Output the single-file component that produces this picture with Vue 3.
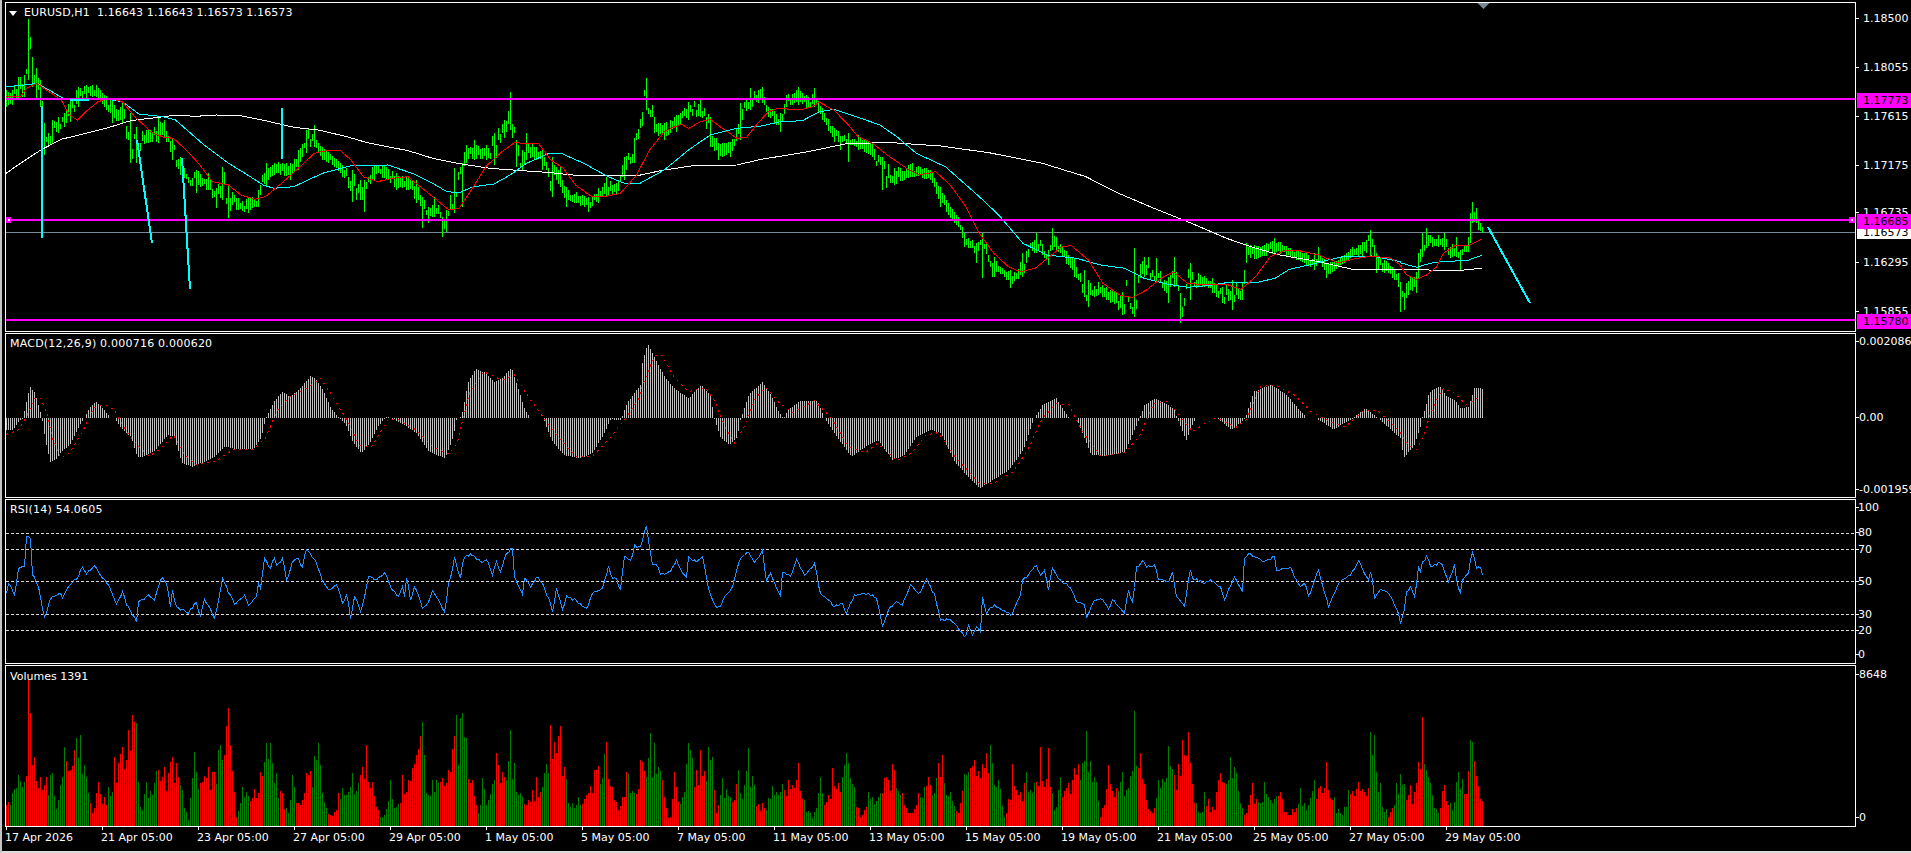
<script setup>
// Chart is drawn in page pixels: each svg viewBox starts at its pane's page position.
// Traces were read off three crops, so x/y are kept in crop units and converted below.
const left = [2.45, 0]
const mid = [2.063, 640]
const right = [3, 1400]

const trace = (oy, parts) =>
  parts.flatMap(([[sx, ox], pts]) =>
    pts.map(([x, ...ys]) => [x / sx + ox, ...ys.map((y) => y / 3 + oy)])
  )

const flat = (a) => {
  const out = []
  for (let i = 0; i < a.length; i += 3) out.push([a[i], a[i + 1], a[i + 2]])
  return out
}
const pairs = (a) => {
  const out = []
  for (let i = 0; i < a.length; i += 2) out.push([a[i], a[i + 1]])
  return out
}

const pricePts = trace(0, [
  [left, flat([15,270,320, 30,270,315, 45,230,295, 60,225,290, 70,58,240, 80,170,260, 90,205,300, 100,240,320, 110,370,465, 125,360,430, 140,350,400, 155,340,380, 170,300,365, 190,260,320, 210,255,295, 235,255,290, 255,285,320, 275,300,370, 300,310,370, 320,340,490, 335,380,490, 360,390,430, 385,350,430, 400,360,410, 420,415,480, 440,470,525, 460,530,550, 480,510,580, 510,520,570, 530,565,625, 545,500,600, 560,555,655, 580,595,630, 610,595,640, 630,570,620, 650,490,560, 680,485,520, 710,490,540, 730,450,510, 750,390,460, 770,375,440, 790,440,480, 820,475,500, 840,495,530, 860,510,605, 880,540,600, 890,540,635, 910,500,540, 940,495,535, 970,520,570, 1000,530,570, 1020,540,610, 1035,590,685, 1050,620,670, 1065,590,650, 1085,650,710, 1095,630,695, 1110,505,640, 1130,490,620, 1140,435,490, 1160,420,480, 1190,435,480, 1210,400,495, 1235,360,415, 1250,275,390, 1265,420,500, 1280,450,510, 1290,400,480, 1310,440,480, 1330,450,510, 1350,470,590, 1370,500,560, 1385,560,620, 1410,575,610, 1440,590,635, 1465,565,610, 1485,530,590, 1510,550,585, 1530,470,540, 1555,415,490])],
  [mid, flat([13,235,330, 30,350,400, 50,370,420, 75,345,395, 100,305,360, 125,300,350, 145,350,440, 160,430,480, 185,425,470, 205,310,420, 225,265,330, 250,262,310, 265,320,350, 290,340,395, 300,285,320, 325,262,315, 345,290,325, 360,265,320, 375,325,360, 400,385,425, 430,400,485, 450,405,450, 480,430,470, 500,470,570, 525,505,555, 560,490,530, 600,510,540, 620,560,620, 640,620,655, 655,650,680, 670,700,740, 695,730,790, 705,700,835, 730,770,830, 750,810,830, 765,810,865, 790,760,830, 815,700,760, 840,750,795, 850,685,750, 870,740,770, 895,775,830, 915,810,890, 925,840,920, 945,845,885, 970,870,910, 995,875,945, 1020,745,950, 1040,770,830, 1065,775,850, 1090,830,910, 1100,770,860, 1115,880,970, 1133,790,900, 1150,820,860, 1180,835,880, 1200,860,910, 1220,840,930, 1243,850,900, 1250,730,790, 1280,740,770, 1310,715,765, 1340,745,770, 1370,760,790, 1390,760,810, 1400,740,790, 1415,790,835, 1440,780,800, 1470,740,770, 1490,725,770, 1507,690,770, 1520,760,820, 1545,790,820, 1565,820,860])],
  [right, flat([0,845,935, 10,880,930, 20,850,895, 30,830,870, 45,815,880, 55,760,835, 67,700,770, 80,685,745, 95,710,740, 115,705,740, 130,700,750, 150,740,775, 165,710,770, 177,750,810, 190,735,755, 205,710,755, 212,640,730, 218,605,670, 225,625,670, 235,660,690, 248,680,700])],
])

const redMa = trace(0, [
  [left, pairs([15,290, 50,290, 65,265, 90,250, 120,275, 150,300, 170,345, 190,360, 210,335, 240,305, 270,295, 300,305, 330,350, 370,395, 400,412, 425,415, 460,455, 490,495, 520,545, 560,555, 590,585, 625,598, 650,590, 690,550, 740,495, 770,460, 800,452, 835,453, 860,480, 890,530, 925,545, 960,535, 1000,530, 1030,560, 1060,590, 1100,630, 1125,625, 1160,560, 1190,500, 1230,455, 1260,428, 1320,432, 1350,480, 1380,505, 1410,555, 1450,590, 1480,590, 1520,580, 1560,525])],
  [mid, pairs([0,505, 20,450, 50,395, 85,372, 100,385, 125,365, 145,358, 170,385, 200,415, 220,412, 240,375, 265,335, 285,325, 330,330, 355,320, 370,307, 400,330, 430,375, 450,410, 480,430, 510,465, 550,505, 575,525, 610,515, 640,555, 670,615, 700,700, 730,760, 760,800, 785,815, 815,805, 845,770, 870,740, 890,737, 925,780, 955,850, 990,885, 1015,893, 1045,870, 1075,835, 1100,815, 1130,850, 1170,855, 1210,853, 1240,868, 1270,830, 1300,770, 1330,752, 1360,752, 1400,765, 1440,788, 1480,775, 1510,768, 1550,775, 1568,795])],
  [right, pairs([0,795, 20,825, 50,838, 80,825, 110,800, 130,760, 165,737, 205,737, 230,725, 245,718])],
])

const cyanMa = trace(0, [
  [left, pairs([15,260, 60,255, 90,250, 120,270, 155,295, 170,300, 250,295, 300,305, 340,342, 400,350, 430,360, 500,435, 560,490, 600,520, 645,555, 670,565, 720,560, 790,520, 860,497, 950,495, 1010,520, 1060,550, 1095,575, 1125,578, 1160,560, 1210,552, 1250,525, 1290,490, 1345,460, 1375,460, 1430,490, 1490,530, 1530,550, 1568,550])],
  [mid, pairs([0,550, 50,510, 100,450, 145,405, 200,385, 250,378, 290,365, 335,362, 370,335, 400,328, 450,352, 495,375, 530,410, 570,460, 630,500, 700,590, 740,645, 790,730, 840,765, 900,775, 950,795, 1000,805, 1040,835, 1090,853, 1130,862, 1170,857, 1210,848, 1270,848, 1310,835, 1340,808, 1380,795, 1420,780, 1450,770, 1510,768, 1568,785])],
  [right, pairs([0,788, 50,802, 90,790, 130,784, 200,782, 245,766])],
])

const whiteMa = trace(0, [
  [left, pairs([15,520, 50,490, 100,450, 150,418, 200,403, 260,385, 320,362, 400,350, 430,346, 480,349, 530,345, 590,347, 650,362, 720,382, 780,390, 850,410, 900,428, 1000,452, 1060,475, 1120,490, 1200,505, 1280,512, 1340,517, 1420,527, 1568,527])],
  [mid, pairs([0,525, 50,510, 110,497, 200,495, 250,478, 340,457, 430,430, 520,428, 620,438, 720,458, 830,490, 920,530, 980,575, 1060,625, 1130,665, 1210,715, 1260,740, 1320,765, 1400,785, 1470,808, 1568,808])],
  [right, pairs([0,808, 170,812, 245,805])],
])

const macdPts = trace(330, [
  [left, pairs([15,300, 30,300, 45,275, 55,265, 65,210, 72,168, 85,190, 97,240, 102,265, 110,330, 122,395, 135,390, 150,365, 170,345, 195,285, 205,265, 220,230, 235,215, 255,240, 270,265, 280,265, 300,300, 320,320, 335,380, 350,380, 380,360, 410,315, 425,320, 445,400, 470,410, 500,395, 520,385, 550,350, 580,358, 620,358, 640,320, 650,265, 670,215, 690,185, 710,200, 730,180, 745,160, 760,138, 775,150, 790,180, 810,235, 830,265, 845,280, 865,340, 885,370, 905,340, 925,290, 945,260, 965,268, 990,285, 1020,310, 1050,365, 1090,385, 1110,320, 1118,265, 1130,260, 1145,160, 1165,115, 1190,130, 1210,155, 1230,145, 1252,112, 1270,180, 1285,240, 1300,265, 1330,265, 1350,330, 1380,375, 1420,385, 1450,370, 1480,310, 1495,268, 1520,270, 1535,220, 1568,165])],
  [mid, pairs([0,120, 15,40, 30,85, 50,140, 70,175, 90,195, 100,205, 125,165, 145,195, 152,265, 165,320, 183,345, 200,320, 207,265, 225,190, 252,157, 270,195, 285,245, 295,265, 305,240, 330,212, 365,212, 380,265, 400,310, 435,380, 470,345, 490,330, 520,390, 545,375, 570,320, 600,300, 620,310, 650,400, 700,475, 760,420, 790,360, 812,265, 830,225, 858,205, 885,265, 900,265, 930,375, 960,378, 1000,365, 1030,265, 1040,225, 1063,205, 1100,235, 1108,265, 1126,330, 1145,265, 1190,265, 1220,300, 1248,265, 1265,185, 1300,165, 1330,190, 1375,265, 1395,265, 1430,298, 1470,265, 1495,235, 1520,262, 1568,325])],
  [right, pairs([0,340, 12,380, 40,350, 60,290, 65,265, 75,235, 85,190, 100,178, 120,170, 140,200, 165,210, 180,235, 205,230, 222,175, 242,175, 248,180])],
])

const signalPts = trace(330, [
  [left, pairs([15,313, 45,300, 65,260, 85,205, 100,205, 115,250, 130,330, 150,385, 170,370, 200,310, 230,235, 255,222, 280,240, 310,305, 340,350, 365,378, 390,360, 425,315, 450,370, 480,405, 530,392, 570,360, 620,358, 650,325, 680,240, 710,200, 750,175, 785,145, 810,190, 850,270, 880,345, 910,350, 950,270, 975,268, 1020,300, 1060,350, 1100,372, 1120,340, 1150,190, 1185,125, 1230,150, 1260,135, 1300,210, 1330,260, 1370,325, 1410,378, 1450,380, 1490,330, 1530,270, 1568,200])],
  [mid, pairs([0,185, 30,78, 45,75, 70,140, 100,185, 135,172, 155,215, 175,290, 195,338, 215,290, 235,210, 260,172, 285,215, 315,248, 360,212, 395,265, 430,350, 465,368, 490,340, 530,392, 560,370, 590,315, 615,308, 650,380, 700,460, 730,460, 770,425, 800,360, 830,265, 860,220, 885,225, 915,310, 950,378, 1000,368, 1030,320, 1060,220, 1090,215, 1120,270, 1140,305, 1165,280, 1190,263, 1230,292, 1250,270, 1280,170, 1310,165, 1350,195, 1385,245, 1430,280, 1455,290, 1490,245, 1520,240, 1568,305])],
  [right, pairs([0,308, 25,345, 50,358, 70,320, 90,255, 110,210, 130,175, 165,190, 200,225, 240,200])],
])

const rsiPts = trace(330, [
  [left, pairs([15,790, 22,760, 35,795, 45,715, 58,710, 65,620, 72,625, 80,735, 92,770, 108,862, 125,800, 145,790, 150,805, 165,770, 190,740, 200,712, 210,732, 232,707, 250,745, 265,765, 285,822, 300,785, 310,825, 334,875, 340,815, 365,795, 375,810, 395,743, 408,760, 417,830, 422,780, 430,830, 460,850, 478,818, 490,858, 500,808, 525,865, 545,745, 560,790, 575,822, 597,795, 610,825, 625,800, 630,760, 637,775, 647,685, 660,715, 670,685, 678,705, 692,685, 702,750, 715,695, 728,685, 738,712, 750,658, 775,700, 790,755, 805,778, 825,765, 840,820, 850,795, 858,868, 868,800, 883,845, 903,740, 920,750, 942,728, 955,770, 975,800, 985,770, 990,800, 996,745, 1005,810, 1015,770, 1035,835, 1045,825, 1060,782, 1088,845, 1100,760, 1113,680, 1125,745, 1135,682, 1152,672, 1180,698, 1192,690, 1205,735, 1215,695, 1225,725, 1240,670, 1252,656, 1260,740, 1278,793, 1285,745, 1298,772, 1315,742, 1328,760, 1340,795, 1354,845, 1362,775, 1377,838, 1388,798, 1410,812, 1437,835, 1450,790, 1475,775, 1490,708, 1497,745, 1508,745, 1517,778, 1530,680, 1545,690, 1555,645, 1568,660])],
  [mid, pairs([0,650, 12,587, 20,670, 25,703, 35,705, 40,733, 60,725, 75,690, 85,730, 95,742, 100,680, 115,695, 128,680, 140,775, 155,832, 165,830, 175,800, 190,770, 205,685, 222,667, 235,697, 253,660, 258,755, 268,730, 288,797, 295,728, 310,738, 322,688, 338,735, 360,700, 370,790, 388,810, 400,830, 418,820, 423,850, 443,795, 470,790, 487,805, 500,888, 515,830, 530,815, 540,825, 557,765, 575,790, 590,748, 605,790, 620,870, 640,870, 670,920, 678,885, 685,915, 695,890, 703,905, 707,800, 712,850, 730,825, 765,855, 785,795, 790,750, 815,707, 825,735, 835,720, 840,780, 850,713, 865,750, 885,770, 900,815, 915,825, 921,862, 935,810, 955,808, 965,838, 975,810, 1000,850, 1005,780, 1015,815, 1025,710, 1037,692, 1045,712, 1062,705, 1070,750, 1090,755, 1098,725, 1105,800, 1123,828, 1133,720, 1140,745, 1165,760, 1175,750, 1195,770, 1205,810, 1225,740, 1241,785, 1248,685, 1255,672, 1285,695, 1310,680, 1313,720, 1340,712, 1360,770, 1370,760, 1380,797, 1397,720, 1420,830, 1440,760, 1465,735, 1482,692, 1500,750, 1508,725, 1515,805, 1525,778, 1545,790, 1555,825, 1568,868])],
  [right, pairs([0,882, 8,860, 20,785, 30,770, 43,800, 55,712, 62,725, 68,695, 80,678, 92,708, 105,705, 115,698, 125,705, 145,755, 163,702, 170,750, 177,788, 185,750, 205,730, 210,690, 218,668, 230,715, 240,712, 248,735])],
])

const volumePts = trace(660, [
  [left, pairs([15,435, 30,400, 45,345, 60,365, 70,60, 75,160, 85,290, 100,350, 115,350, 125,340, 140,420, 150,350, 157,260, 170,330, 185,235, 197,225, 210,350, 225,460, 240,365, 255,410, 265,380, 280,290, 300,260, 312,210, 323,165, 333,190, 345,440, 360,365, 385,330, 400,320, 420,290, 430,310, 445,390, 460,480, 476,275, 490,370, 510,320, 535,270, 560,145, 565,255, 580,470, 595,380, 615,415, 635,335, 650,250, 662,250, 675,340, 690,400, 705,460, 716,345, 730,430, 750,340, 780,250, 790,400, 810,465, 830,400, 860,340, 885,320, 898,255, 910,365, 925,450, 940,465, 955,360, 970,440, 985,345, 1010,325, 1020,285, 1035,185, 1045,400, 1060,360, 1085,355, 1100,330, 1115,165, 1132,160, 1140,235, 1155,360, 1170,460, 1182,355, 1195,420, 1215,280, 1235,350, 1250,210, 1260,310, 1275,400, 1295,420, 1315,350, 1335,340, 1348,195, 1372,198, 1380,320, 1400,430, 1415,410, 1440,400, 1455,330, 1485,245, 1500,380, 1515,450, 1535,335, 1568,340])],
  [mid, pairs([0,300, 22,220, 30,250, 45,360, 60,470, 72,335, 85,410, 100,250, 115,330, 125,270, 140,262, 150,290, 158,460, 170,355, 185,410, 203,330, 215,375, 222,265, 235,375, 250,430, 265,415, 272,378, 295,372, 325,310, 340,420, 355,475, 372,350, 385,425, 397,325, 415,350, 425,278, 440,380, 455,470, 470,395, 490,410, 505,355, 520,312, 540,400, 560,460, 575,400, 595,350, 625,285, 640,395, 655,460, 670,342, 690,300, 722,255, 740,360, 752,470, 768,312, 780,405, 795,335, 805,390, 825,260, 835,380, 843,265, 855,450, 865,350, 895,325, 921,213, 940,365, 950,470, 965,315, 980,385, 995,335, 1005,385, 1020,153, 1030,280, 1045,420, 1055,460, 1070,360, 1090,258, 1100,345, 1119,240, 1132,217, 1145,430, 1155,460, 1165,395, 1180,440, 1195,340, 1205,370, 1218,290, 1230,340, 1245,465, 1262,370, 1275,425, 1288,365, 1300,420, 1320,395, 1340,465, 1360,385, 1375,450, 1390,360, 1400,385, 1415,305, 1430,410, 1445,460, 1460,390, 1480,365, 1495,395, 1507,217, 1515,225, 1525,370, 1545,470, 1560,370, 1568,410])],
  [right, pairs([0,342, 10,372, 30,375, 40,395, 55,305, 67,170, 72,312, 80,330, 90,370, 97,405, 105,448, 115,460, 127,393, 133,375, 140,422, 160,425, 165,365, 175,336, 185,358, 205,333, 212,240, 218,245, 225,348, 235,378, 248,422])],
])

// seeded so every render gives the same chart
let seed = 20260417
const rnd = () => {
  seed = (seed * 1664525 + 1013904223) % 4294967296
  return seed / 4294967296
}

const FIRST_X = 6
const BAR_COUNT = 739
const barXs = Array.from({ length: BAR_COUNT }, (_, i) => FIRST_X + i * 2)
const barIndex = (x) => Math.max(0, Math.min(BAR_COUNT - 1, Math.round((x - FIRST_X) / 2)))

const sample = (pts, x, col = 1) => {
  if (x <= pts[0][0]) return pts[0][col]
  for (let i = 1; i < pts.length; i++) {
    if (x <= pts[i][0]) {
      const [a, b] = [pts[i - 1], pts[i]]
      const span = b[0] - a[0]
      if (span <= 0) return b[col]
      return a[col] + ((b[col] - a[col]) * (x - a[0])) / span
    }
  }
  return pts[pts.length - 1][col]
}

const linePath = (pts) => 'M' + pts.map(([x, y]) => `${x.toFixed(1)} ${y.toFixed(1)}`).join('L')

// price bars: random bar inside the traced range, traced bars kept as they are
const priceRows = barXs.map((x) => {
  const top = sample(pricePts, x, 1)
  const bottom = sample(pricePts, x, 2)
  const range = bottom - top
  const h = Math.min(range, 5 + rnd() * 9)
  const y = top + rnd() * (range - h)
  return [y, y + h]
})
pricePts.forEach(([x, top, bottom]) => {
  priceRows[barIndex(x)] = [top, bottom]
})
const priceBars = barXs
  .map((x, i) => `M${x + 0.5} ${Math.round(priceRows[i][0])}V${Math.round(priceRows[i][1])}`)
  .join('')

const MACD_ZERO = 418
const macdBars = barXs
  .map((x) => `M${x + 0.5} ${MACD_ZERO}V${Math.round(sample(macdPts, x))}`)
  .join('')

const rsiRows = barXs.map((x) => sample(rsiPts, x) + (rnd() - 0.5) * 2.4)
rsiPts.forEach(([x, y]) => {
  rsiRows[barIndex(x)] = y
})
const rsiPath = linePath(barXs.map((x, i) => [x + 0.5, rsiRows[i]]))

const VOLUME_BASE = 826
const volumeRows = barXs.map((x) => VOLUME_BASE - (VOLUME_BASE - sample(volumePts, x)) * (0.55 + rnd() * 0.45))
volumePts.forEach(([x, y]) => {
  volumeRows[barIndex(x)] = y
})
let up = false
let runLeft = 2
let upBars = ''
let downBars = ''
barXs.forEach((x, i) => {
  if (runLeft-- <= 0) {
    up = !up
    runLeft = 2 + Math.floor(rnd() * 9)
  }
  const isUp = x > 1472 ? false : up
  const piece = `M${x + 0.5} ${VOLUME_BASE}V${Math.round(volumeRows[i])}`
  if (isUp) upBars += piece
  else downBars += piece
})

const paths = {
  red: linePath(redMa),
  cyan: linePath(cyanMa),
  white: linePath(whiteMa),
  signal: linePath(signalPts),
}

const levels = [533, 549, 581, 614, 630]
const hLines = [98, 219, 319]
const trendLines = [
  [41.5, 106, 41.5, 238],
  [137, 140, 152, 243],
  [182, 158, 190, 289],
  [281.5, 108, 281.5, 159],
  [70, 100, 89, 100],
  [1488, 227, 1530, 303],
]

const PANE_TOPS = { price: 2, macd: 333, rsi: 499, volume: 665 }
const axisItem = (pane, text, y, pad) => ({ text, top: y - PANE_TOPS[pane] - 7, pad })

const priceAxis = [
  ['1.18500', 18.5], ['1.18055', 67.5], ['1.17615', 116.5], ['1.17175', 165.5],
  ['1.16735', 213], ['1.16295', 263], ['1.15855', 311.5],
].map(([t, y]) => axisItem('price', t, y, 7))

const priceTags = [
  { text: '1.17773', top: 91 },
  { text: '1.16685', top: 212 },
  { text: '1.15780', top: 312 },
]

const macdAxis = [['0.002086', 342], ['0.00', 418], ['-0.001959', 490]].map(([t, y]) => axisItem('macd', t, y, 3))
const rsiAxis = [['100', 508], ['80', 533], ['70', 549.5], ['50', 581.5], ['30', 614.5], ['20', 630.5], ['0', 655]]
  .map(([t, y]) => axisItem('rsi', t, y, 2))
const volumeAxis = [['8648', 674.5], ['0', 818]].map(([t, y]) => axisItem('volume', t, y, 3))

const timeLabels = [
  '17 Apr 2026', '21 Apr 05:00', '23 Apr 05:00', '27 Apr 05:00', '29 Apr 05:00', '1 May 05:00',
  '5 May 05:00', '7 May 05:00', '11 May 05:00', '13 May 05:00', '15 May 05:00', '19 May 05:00',
  '21 May 05:00', '25 May 05:00', '27 May 05:00', '29 May 05:00',
].map((text, i) => ({ text, left: i * 96 }))
</script>

<template>
  <div class="terminal">
    <div class="pane pane-price">
      <div class="plot">
        <svg width="1849" height="328" viewBox="6 3 1849 328">
          <rect x="6" y="232" width="1849" height="1" fill="#778899" />
          <path :d="priceBars" class="bars" stroke="#00ff00" />
          <path :d="paths.white" class="line" stroke="#ffffff" />
          <path :d="paths.cyan" class="line" stroke="#00ffff" />
          <path :d="paths.red" class="line" stroke="#ff0000" />
          <rect v-for="y in hLines" :key="y" x="6" :y="y" width="1849" height="2" fill="#ff00ff" />
          <line
            v-for="(t, i) in trendLines"
            :key="i"
            :x1="t[0]"
            :y1="t[1]"
            :x2="t[2]"
            :y2="t[3]"
            class="trend"
          />
          <rect x="6" y="217" width="5" height="6" fill="#ff00ff" />
          <rect x="8" y="219" width="2" height="2" fill="#ffffff" />
          <rect x="1849" y="217" width="6" height="6" fill="#ff00ff" />
          <rect x="1851" y="219" width="2" height="2" fill="#ffffff" />
          <polygon points="1477.5,3 1489.5,3 1483.5,9" fill="#778899" />
        </svg>
        <div class="caption caption-price">
          <svg class="arrow" width="8" height="5" viewBox="0 0 8 5"><polygon points="0,0 8,0 4,5" fill="#fff" /></svg>
          <span>EURUSD,H1&nbsp;&nbsp;1.16643 1.16643 1.16573 1.16573</span>
        </div>
      </div>
      <div class="axis">
        <span
          v-for="a in priceAxis"
          :key="a.text"
          class="axis-label"
          :style="{ top: a.top + 'px', paddingLeft: a.pad + 'px' }"
        >{{ a.text }}</span>
        <span
          v-for="t in priceTags"
          :key="t.text"
          class="axis-tag"
          :style="{ top: t.top + 'px' }"
        >{{ t.text }}</span>
        <span class="axis-bid">1.16573</span>
      </div>
    </div>

    <div class="pane pane-macd">
      <div class="plot">
        <svg width="1849" height="163" viewBox="6 334 1849 163">
          <path :d="macdBars" class="bars" stroke="#c0c0c0" />
          <path :d="paths.signal" class="line dashed-signal" stroke="#ff0000" />
        </svg>
        <div class="caption caption-sub">MACD(12,26,9) 0.000716 0.000620</div>
      </div>
      <div class="axis">
        <span
          v-for="a in macdAxis"
          :key="a.text"
          class="axis-label"
          :style="{ top: a.top + 'px', paddingLeft: a.pad + 'px' }"
        >{{ a.text }}</span>
      </div>
    </div>

    <div class="pane pane-rsi">
      <div class="plot">
        <svg width="1849" height="163" viewBox="6 500 1849 163">
          <line
            v-for="y in levels"
            :key="y"
            x1="6"
            x2="1855"
            :y1="y + 0.5"
            :y2="y + 0.5"
            class="level"
          />
          <path :d="rsiPath" class="line" stroke="#1e90ff" />
        </svg>
        <div class="caption caption-sub">RSI(14) 54.0605</div>
      </div>
      <div class="axis">
        <span
          v-for="a in rsiAxis"
          :key="a.text"
          class="axis-label"
          :style="{ top: a.top + 'px', paddingLeft: a.pad + 'px' }"
        >{{ a.text }}</span>
      </div>
    </div>

    <div class="pane pane-volume">
      <div class="plot">
        <svg width="1849" height="160" viewBox="6 666 1849 160">
          <path :d="upBars" class="bars" stroke="#008000" />
          <path :d="downBars" class="bars" stroke="#ff0000" />
        </svg>
        <div class="caption caption-volume">Volumes 1391</div>
      </div>
      <div class="axis">
        <span
          v-for="a in volumeAxis"
          :key="a.text"
          class="axis-label"
          :style="{ top: a.top + 'px', paddingLeft: a.pad + 'px' }"
        >{{ a.text }}</span>
      </div>
    </div>

    <div class="time-axis">
      <span
        v-for="t in timeLabels"
        :key="t.text"
        class="time-label"
        :style="{ left: t.left + 'px' }"
      >{{ t.text }}</span>
    </div>
    <div class="status-line"></div>
  </div>
</template>

<style scoped>
.terminal {
  box-sizing: border-box;
  width: 1911px;
  height: 853px;
  padding-top: 2px;
  border-left: 2px solid #c4c4c4;
  background: #000;
  color: #fff;
  font-family: "DejaVu Sans", sans-serif;
  font-size: 11px;
  overflow: hidden;
}

.pane {
  display: flex;
  margin-left: 3px;
  margin-bottom: 1px;
}

.pane-volume {
  margin-bottom: 0;
}

.plot {
  position: relative;
  box-sizing: border-box;
  width: 1851px;
  border: 1px solid #fff;
}

.pane-price .plot { height: 330px; }
.pane-macd .plot { height: 165px; }
.pane-rsi .plot { height: 165px; }
.pane-volume .plot { height: 162px; }

.plot svg {
  display: block;
}

.bars {
  fill: none;
  stroke-width: 1;
  shape-rendering: crispEdges;
}

.line {
  fill: none;
  stroke-width: 1;
  shape-rendering: crispEdges;
}

.dashed-signal {
  stroke-dasharray: 2 4;
}

.trend {
  stroke: #00ffff;
  stroke-width: 2;
  shape-rendering: crispEdges;
}

.level {
  stroke: #d8d8d8;
  stroke-width: 1;
  stroke-dasharray: 3 2;
  shape-rendering: crispEdges;
}

.caption {
  position: absolute;
  line-height: 14px;
  white-space: nowrap;
}

.caption-price {
  display: flex;
  align-items: center;
  top: 3px;
  left: 3px;
  letter-spacing: 0.1px;
}

.arrow {
  margin-right: 7px;
}

.caption-sub {
  top: 3px;
  left: 4px;
  letter-spacing: 0.22px;
}

.caption-volume {
  top: 4px;
  left: 4px;
}

.axis {
  position: relative;
  flex: 1;
}

.axis-label {
  position: absolute;
  left: 0;
  line-height: 14px;
  white-space: nowrap;
}

.axis-label::before {
  content: "";
  position: absolute;
  left: 0;
  top: 6px;
  width: 3px;
  height: 1px;
  background: #fff;
}

.axis-tag,
.axis-bid {
  position: absolute;
  left: 1px;
  width: 48px;
  padding-left: 6px;
  color: #000;
  overflow: hidden;
  white-space: nowrap;
}

.axis-tag {
  height: 15px;
  line-height: 16px;
  background: #ff00ff;
}

.axis-bid {
  top: 227px;
  height: 10px;
  line-height: 8px;
  background: #fff;
}

.time-axis {
  position: relative;
  height: 24px;
  margin-left: 3px;
}

.time-label {
  position: absolute;
  top: 0;
  padding-top: 4px;
  line-height: 14px;
  white-space: nowrap;
}

.time-label::before {
  content: "";
  position: absolute;
  left: 1px;
  top: 0;
  width: 1px;
  height: 3px;
  background: #fff;
}

.status-line {
  height: 2px;
  background: #dcdcdc;
}
</style>

<style>
html,
body {
  margin: 0;
  background: #000;
  overflow: hidden;
}
</style>
